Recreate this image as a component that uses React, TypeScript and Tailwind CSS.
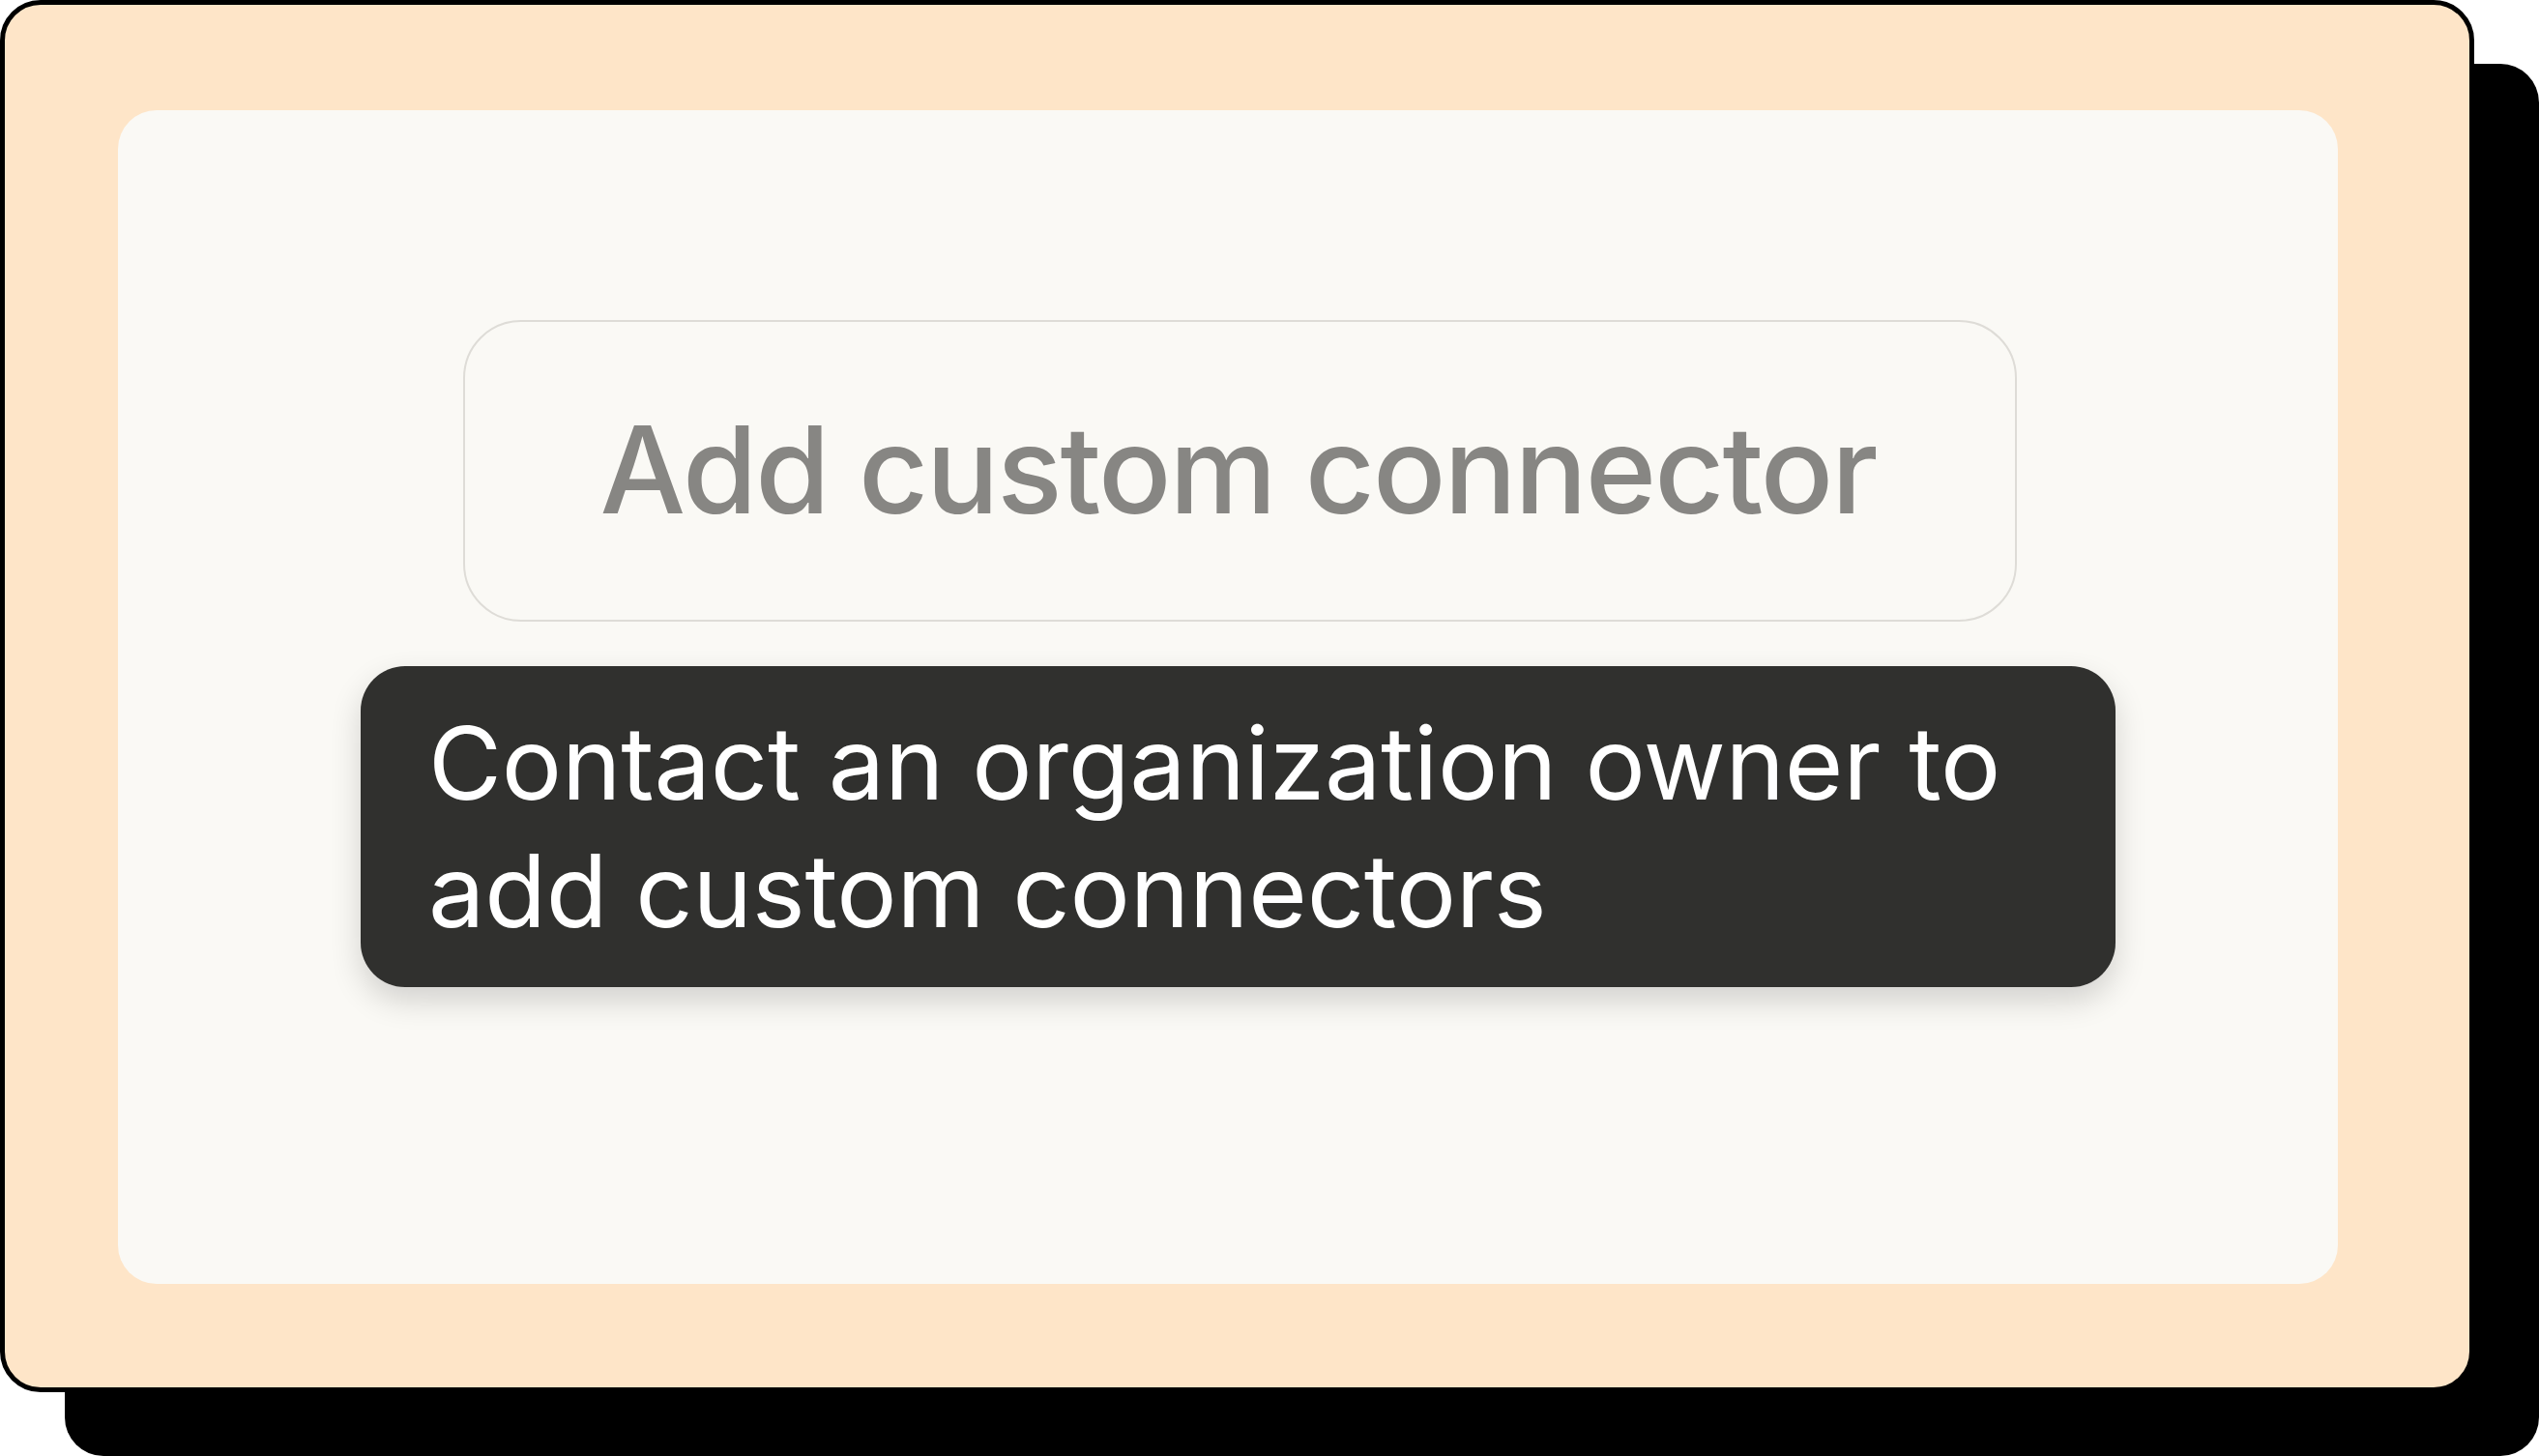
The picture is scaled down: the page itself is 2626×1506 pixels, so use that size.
import React from "react";

export default function App() {
  return (
    <div className="w-[2626px] h-[1506px] bg-white relative overflow-hidden" style={{ fontFamily: "Inter, 'Noto Sans', sans-serif" }}>
      <div className="absolute left-[67px] top-[66px] w-[2559px] h-[1440px] bg-black rounded-[40px]" />
      <div className="relative w-[2559px] h-[1440px] bg-[#FEE5C8] border-[5px] border-black rounded-[42px] pl-[117px] pt-[109px] pr-[136px] pb-[106px]">
        <div className="w-[2296px] h-[1214px] bg-[#FAF9F5] rounded-[40px] pt-[217px] flex flex-col">
          <div className="ml-[357px] w-[1607px] h-[312px] border-2 border-[#DEDCD7] rounded-[60px] flex items-center justify-center">
            <span className="text-[125px] font-medium text-[#878683] tracking-[-2px] leading-none pb-[4px] pr-[4px]">Add custom connector</span>
          </div>
          <div className="ml-[251px] mt-[46px] w-[1815px] h-[332px] bg-[#30302E] rounded-[46px] shadow-[0_14px_32px_rgba(0,0,0,0.16)] pl-[70px] pt-[34px]">
            <p className="text-[104px] leading-[132px] tracking-[-0.2px] text-white font-normal">
              Contact an organization owner to
              <br />
              add custom connectors
            </p>
          </div>
        </div>
      </div>
    </div>
  );
}
